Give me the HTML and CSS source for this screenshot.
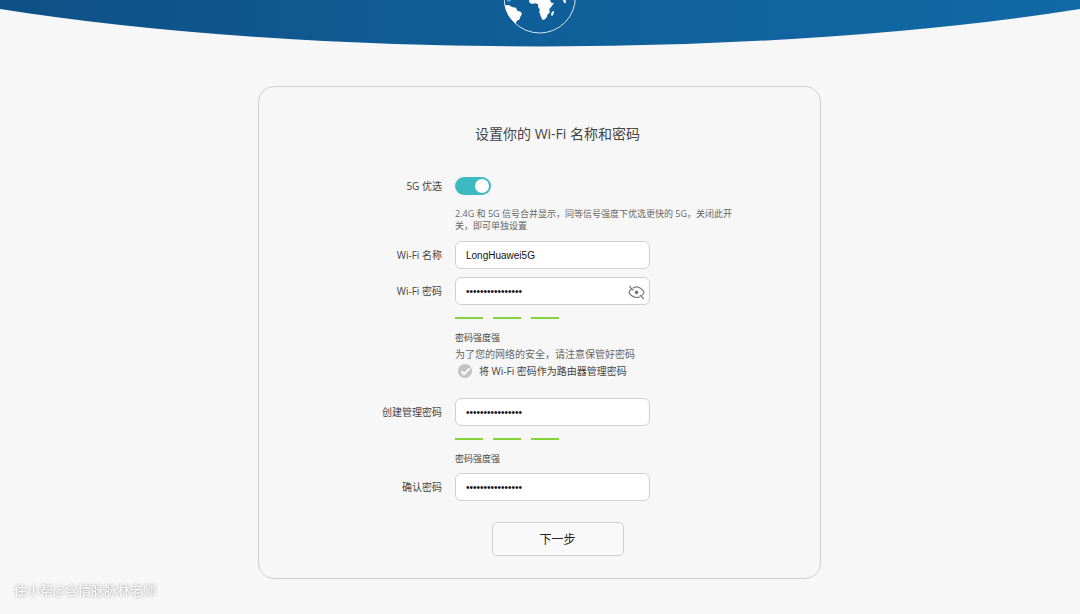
FILE: index.html
```html
<!DOCTYPE html>
<html lang="zh-CN">
<head>
<meta charset="utf-8">
<meta name="viewport" content="width=device-width, initial-scale=1">
<title>设置你的 Wi-Fi 名称和密码</title>
<link rel="stylesheet" href="styles.css">
</head>
<body>
<header class="banner">
  <svg class="banner-curve" viewBox="0 0 1080 48" preserveAspectRatio="none" aria-hidden="true">
    <defs>
      <linearGradient id="sea" x1="0" y1="0" x2="1" y2="0">
        <stop offset="0" stop-color="#0d5085"/>
        <stop offset="0.5" stop-color="#105f99"/>
        <stop offset="1" stop-color="#1269a6"/>
      </linearGradient>
    </defs>
    <path fill="url(#sea)" d="M0 0H1080V9A854 166 0 0 1 0 9Z"/>
  </svg>
  <svg class="banner-globe" viewBox="72 0 219 105" aria-hidden="true">
    <path d="M72 -8A107 107 0 0 0 286 -8" fill="none" stroke="#d5e6f3" stroke-width="3"/>
    <path fill="#fff" d="M74 15L88 16L96 21L108 23L112 32L122 35L126 42L121 50L119 58L111 62L107 70C90 58 78 38 74 15Z"/>
    <path fill="#fff" d="M148 0L147 6L155 12L166 10L174 13L174 20L179 28L178 37L184 53L188 60L195 58L201 50L203 43L209 38L208 27L215 19L222 9L214 8L210 0Z"/>
    <path fill="#fff" d="M221 32L222 38L217 48L213 46L215 37ZM248 0L254 10L258 9L257 0Z"/>
    <path fill="#5caee6" d="M81 0H93L89 5L82 4Z"/>
  </svg>
</header>

<main class="page">
  <form class="card">
    <h1 class="title">设置你的 Wi-Fi 名称和密码</h1>

    <div class="row row-switch">
      <label class="label" for="prefer5g">5G 优选</label>
      <input class="switch" id="prefer5g" type="checkbox" role="switch" checked>
    </div>
    <p class="hint">2.4G 和 5G 信号合并显示，同等信号强度下优选更快的 5G，关闭此开关，即可单独设置</p>

    <div class="row">
      <label class="label" for="ssid">Wi-Fi 名称</label>
      <input class="field" id="ssid" type="text" value="LongHuawei5G">
    </div>

    <div class="row row-pass">
      <label class="label" for="wifipass">Wi-Fi 密码</label>
      <div class="field-wrap">
        <input class="field" id="wifipass" type="password" value="abcdefgh12345678">
        <button class="eye" type="button" aria-label="显示密码">
          <svg viewBox="0 0 17 15" aria-hidden="true">
            <g fill="none" stroke="#777" stroke-width="1.2" stroke-linecap="round">
              <path d="M5.2 3C7.4 1.7 10.7 1.9 12.8 3.5C14.4 4.6 15.6 6 16 7.4C15.6 8.6 15 9.6 14 10.4M11.5 12C8.8 13 5.8 12.2 3.8 10.7C2.3 9.7 1.3 8.6 1 7.4C1.3 6.2 2.1 5.1 3.2 4.2"/>
              <path d="M2 1V2.2L5 5.1M12.3 10.5L15.2 13V14"/>
            </g>
            <circle cx="8.6" cy="7.4" r="1.8" fill="#777"/>
          </svg>
        </button>
      </div>
    </div>
    <div class="strength">
      <div class="bars"><span class="bar"></span><span class="bar"></span><span class="bar"></span></div>
      <p class="strength-text">密码强度强</p>
    </div>
    <p class="note">为了您的网络的安全，请注意保管好密码</p>
    <label class="same">
      <input class="tick" type="checkbox" checked>
      <span>将 Wi-Fi 密码作为路由器管理密码</span>
    </label>

    <div class="row row-admin">
      <label class="label" for="adminpass">创建管理密码</label>
      <input class="field" id="adminpass" type="password" value="abcdefgh12345678">
    </div>
    <div class="strength">
      <div class="bars"><span class="bar"></span><span class="bar"></span><span class="bar"></span></div>
      <p class="strength-text">密码强度强</p>
    </div>

    <div class="row row-confirm">
      <label class="label" for="confirm">确认密码</label>
      <input class="field" id="confirm" type="password" value="abcdefgh12345678">
    </div>

    <button class="next" type="submit">下一步</button>
  </form>
</main>
<div class="watermark">住小帮@含情脉脉林老师</div>
</body>
</html>
```

FILE: styles.css
```css
*,
*::before {
  box-sizing: border-box;
}

body {
  margin: 0;
  background: #f7f7f7;
  color: #444;
  font-family: "Open Sans", "Noto Sans CJK SC", sans-serif;
  font-size: 10px;
  line-height: 16px;
}

h1,
p {
  margin: 0;
}

.banner {
  display: grid;
  justify-items: center;
}

.banner-curve,
.banner-globe {
  grid-area: 1 / 1;
  display: block;
}

.banner-curve {
  width: 100%;
  height: 48px;
}

.banner-globe {
  width: 73px;
  height: 35px;
}

.page {
  display: flex;
  justify-content: center;
  padding: 38px 17px 34px 16px;
}

.card {
  --label: 147px;
  --gap: 13px;
  display: flex;
  flex-direction: column;
  width: 100%;
  max-width: 563px;
  padding: 35px 0 22px 36px;
  border: 1px solid #d0d0d0;
  border-radius: 16px;
}

.title {
  font-size: 14px;
  font-weight: 400;
  line-height: 24px;
  text-align: center;
}

.row {
  display: grid;
  grid-template-columns: var(--label) 195px;
  column-gap: var(--gap);
  align-items: center;
}

.row-switch {
  margin-top: 31px;
}

.label {
  text-align: right;
}

.hint,
.strength,
.note,
.same {
  margin-left: calc(var(--label) + var(--gap));
}

.hint {
  max-width: 280px;
  margin-top: 13px;
  margin-bottom: 9px;
  color: #666;
  font-size: 9px;
  line-height: 12px;
}

.switch {
  appearance: none;
  width: 36px;
  height: 18px;
  margin: 0;
  padding: 2px;
  border-radius: 9px;
  background: #ccc;
}

.switch::before {
  content: "";
  display: block;
  width: 14px;
  height: 14px;
  border-radius: 50%;
  background: #fff;
}

.switch:checked {
  background: #3cbac1;
}

.switch:checked::before {
  margin-left: auto;
}

.field {
  width: 100%;
  height: 28px;
  padding: 0 10px;
  border: 1px solid #d0d0d0;
  border-radius: 6px;
  background: #fff;
  color: #111;
  font-family: "Liberation Sans", "Noto Sans CJK SC", sans-serif;
  font-size: 10px;
}

.row-pass {
  margin-top: 8px;
}

.row-confirm {
  margin-top: 6px;
}

.field-wrap {
  position: relative;
}

.eye {
  position: absolute;
  top: 0;
  right: 5px;
  display: flex;
  align-items: center;
  height: 100%;
  padding: 2px 0 0;
  border: 0;
  background: none;
}

.eye svg {
  width: 17px;
  height: 15px;
}

.bars {
  display: flex;
  gap: 10px;
  padding-top: 12px;
}

.bar {
  width: 28px;
  height: 2px;
  background: #86d43c;
}

.strength-text {
  margin-top: 11px;
  font-size: 9px;
}

.note {
  color: #666;
}

.same {
  display: flex;
  align-items: center;
  gap: 7px;
  margin-top: 1px;
  padding-left: 3px;
}

.tick {
  appearance: none;
  display: grid;
  place-items: center;
  width: 14px;
  height: 14px;
  margin: 0;
  border-radius: 50%;
  background: #c4c4c4;
}

.tick:checked::before {
  content: "";
  width: 9px;
  height: 5px;
  margin-bottom: 2px;
  border: solid #fff;
  border-width: 0 0 2px 2px;
  transform: rotate(-45deg);
}

.row-admin {
  margin-top: 19px;
}

.next {
  align-self: center;
  width: 132px;
  height: 34px;
  margin-top: 21px;
  padding: 0;
  border: 1px solid #d0d0d0;
  border-radius: 5px;
  background: #f9f9f9;
  color: #222;
  font-family: inherit;
  font-size: 12px;
}

.watermark {
  position: fixed;
  left: 14px;
  bottom: 14px;
  color: #fff;
  font-family: "Noto Sans CJK SC", sans-serif;
  font-size: 13px;
  line-height: 20px;
  text-shadow: 0 0 3px #888;
}
```
